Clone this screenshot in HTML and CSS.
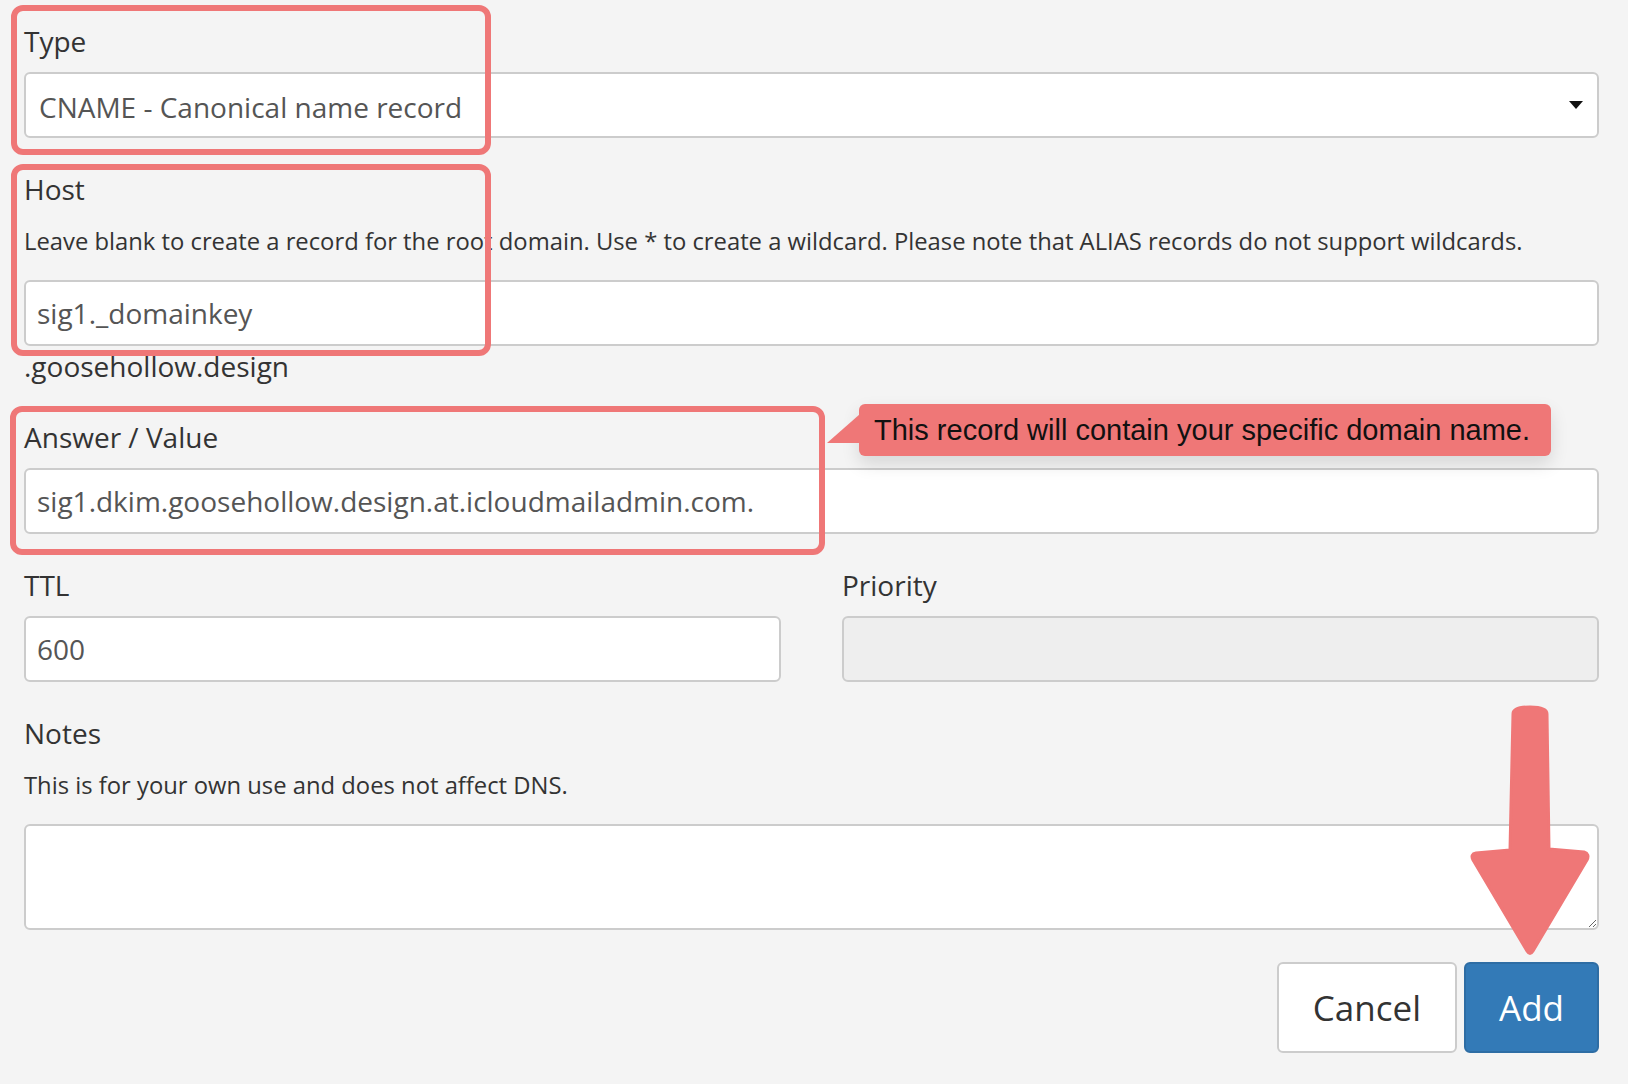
FILE: index.html
```html
<!DOCTYPE html>
<html>
<head>
  <meta charset="UTF-8">
  <title>Edit DNS record</title>
  <link rel="stylesheet" href="styles.css">
</head>
<body>
  <form class="record-form">
    <div class="form-group">
      <label>Type</label>
      <div class="select-wrap">
        <select class="form-control">
          <option>CNAME - Canonical name record</option>
        </select>
      </div>
    </div>

    <div class="form-group">
      <label>Host</label>
      <p class="help">Leave blank to create a record for the root domain. Use * to create a wildcard. Please note that ALIAS records do not support wildcards.</p>
      <input class="form-control" type="text" value="sig1._domainkey">
      <div class="suffix">.goosehollow.design</div>
    </div>

    <div class="form-group">
      <label>Answer / Value</label>
      <input class="form-control" type="text" value="sig1.dkim.goosehollow.design.at.icloudmailadmin.com.">
    </div>

    <div class="form-row">
      <div class="form-group">
        <label>TTL</label>
        <input class="form-control" type="text" value="600">
      </div>
      <div class="form-group">
        <label>Priority</label>
        <input class="form-control" type="text" disabled>
      </div>
    </div>

    <div class="form-group notes-group">
      <label>Notes</label>
      <p class="help">This is for your own use and does not affect DNS.</p>
      <textarea class="form-control notes"></textarea>
    </div>

    <div class="actions">
      <button type="button" class="btn">Cancel</button>
      <button type="button" class="btn btn-primary">Add</button>
    </div>
  </form>

  <!-- annotation layer drawn over the form -->
  <div class="mark mark-type"></div>
  <div class="mark mark-host"></div>
  <div class="mark mark-answer"></div>

  <div class="callout">
    <svg class="callout-tail" width="34" height="30" viewBox="0 0 34 30">
      <polygon points="0,29 33,0 33,29" fill="#ef7777"/>
    </svg>
    This record will contain your specific domain name.
  </div>

  <svg class="arrow" width="140" height="265" viewBox="0 0 140 265">
    <path d="M53 14 Q53 7 70 7 Q87 7 87 14 L89 149 L124 152 Q130 154 127 160 L73 251 Q70 256 67 251 L13 160 Q10 154 16 153 L50 150 Z"
          fill="#ef7777" stroke="#ef7777" stroke-width="3" stroke-linejoin="round"/>
  </svg>
</body>
</html>
```

FILE: styles.css
```css
:root {
  --bg-color: #f4f4f4;
  --text-color: #333333;
  --input-text: #555555;
  --border-color: #cccccc;
  --disabled-bg: #eeeeee;
  --primary-color: #337ab7;
  --primary-border: #2e6da4;
  --mark-color: #ef7777;
}

html, body {
  margin: 0;
  height: 100%;
  overflow: hidden;
}

body {
  position: relative;
  background-color: var(--bg-color);
  color: var(--text-color);
  font-family: "Open Sans", "Noto Sans", sans-serif;
  font-size: 28px;
  line-height: 40px;
  padding: 21px 29px 0 24px;
  box-sizing: border-box;
}

.record-form {
  display: flex;
  flex-direction: column;
}

.form-group {
  display: flex;
  flex-direction: column;
  margin-bottom: 31px;
}
.notes-group {
  margin-bottom: 32px;
}

.form-group label {
  display: block;
  margin-bottom: 11px;
}

.help {
  font-size: 23.8px;
  line-height: 34px;
  margin: 4px 0 22px;
}

.form-control {
  display: block;
  width: 100%;
  height: 66px;
  box-sizing: border-box;
  padding: 0 11px;
  font-family: "Open Sans", "Noto Sans", sans-serif;
  font-size: 28px;
  color: var(--input-text);
  background-color: #ffffff;
  border: 2px solid var(--border-color);
  border-radius: 6px;
  outline: none;
}
.form-control:disabled {
  background-color: var(--disabled-bg);
}

.select-wrap {
  position: relative;
}
.select-wrap select {
  -webkit-appearance: none;
  appearance: none;
  padding: 4px 13px 0;
}
.select-wrap::after {
  content: "";
  position: absolute;
  right: 16px;
  top: 29px;
  border-left: 7px solid transparent;
  border-right: 7px solid transparent;
  border-top: 8px solid #111111;
}

.suffix {
  line-height: 40px;
}

.form-row {
  display: grid;
  grid-template-columns: 1fr 1fr;
  column-gap: 61px;
}

.notes {
  height: 106px;
  padding: 10px 11px;
  resize: vertical;
}

.actions {
  display: flex;
  justify-content: flex-end;
  gap: 7px;
}

.btn {
  height: 91px;
  padding: 0 34px;
  font-family: "Open Sans", "Noto Sans", sans-serif;
  font-size: 35px;
  color: var(--text-color);
  background-color: #ffffff;
  border: 2px solid var(--border-color);
  border-radius: 6px;
  cursor: pointer;
}
.btn-primary {
  padding: 0 33px;
  color: #ffffff;
  background-color: var(--primary-color);
  border-color: var(--primary-border);
}

/* annotations */
.mark {
  position: absolute;
  border: 6px solid var(--mark-color);
  border-radius: 12px;
  box-sizing: border-box;
}
.mark-type { left: 11px; top: 5px; width: 480px; height: 150px; }
.mark-host { left: 11px; top: 164px; width: 480px; height: 192px; }
.mark-answer { left: 10px; top: 406px; width: 815px; height: 149px; }

.callout {
  position: absolute;
  left: 859px;
  top: 404px;
  width: 692px;
  height: 52px;
  box-sizing: border-box;
  padding-left: 15px;
  background-color: var(--mark-color);
  border-radius: 6px;
  box-shadow: 0 8px 18px rgba(0, 0, 0, 0.12);
  font-family: "Liberation Sans", Arial, sans-serif;
  font-size: 29px;
  line-height: 52px;
  color: #111111;
}
.callout-tail {
  position: absolute;
  left: -32px;
  top: 10px;
}

.arrow {
  position: absolute;
  left: 1460px;
  top: 700px;
}
```
